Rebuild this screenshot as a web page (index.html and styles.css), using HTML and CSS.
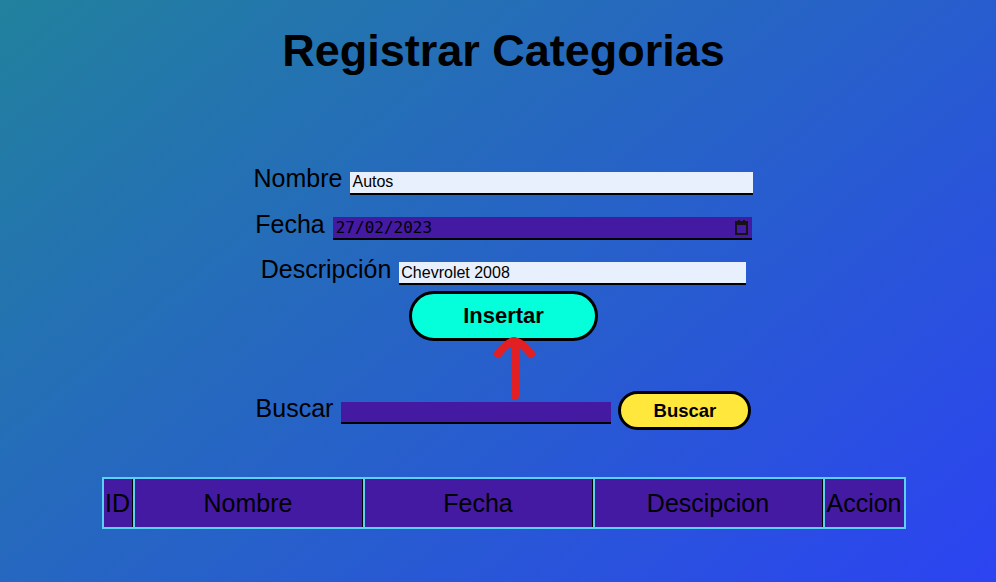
FILE: index.html
```html
<!DOCTYPE html>
<html lang="es">
<head>
<meta charset="utf-8">
<title>Registrar Categorias</title>
<link rel="stylesheet" href="styles.css">
</head>
<body>
<main class="page">
  <h1 class="title">Registrar Categorias</h1>
  <form class="form">
    <div class="row row-nombre">
      <label class="label">Nombre</label>
      <input class="field field-light w-nombre" type="text" value="Autos">
    </div>
    <div class="row row-fecha">
      <label class="label">Fecha</label>
      <div class="field field-date w-fecha">
        <span class="date-text">27/02/2023</span>
        <svg class="cal-icon" width="13" height="15" viewBox="0 0 13 15" aria-hidden="true">
          <rect x="3" y="0" width="2" height="3" fill="#141414"/>
          <rect x="8" y="0" width="2" height="3" fill="#141414"/>
          <rect x="1" y="2" width="11" height="12" fill="none" stroke="#141414" stroke-width="2"/>
          <rect x="1" y="2" width="11" height="3" fill="#141414"/>
        </svg>
      </div>
    </div>
    <div class="row row-desc">
      <label class="label">Descripción</label>
      <input class="field field-light w-desc" type="text" value="Chevrolet 2008">
    </div>
    <div class="row-btn">
      <button type="button" class="btn btn-insert">Insertar</button>
    </div>
    <div class="row row-buscar">
      <label class="label">Buscar</label>
      <input class="field field-dark w-buscar" type="text" value="">
      <button type="button" class="btn btn-buscar">Buscar</button>
    </div>
  </form>
  <table class="table">
    <thead>
      <tr>
        <th class="c-id">ID</th>
        <th class="c-wide">Nombre</th>
        <th class="c-wide">Fecha</th>
        <th class="c-wide">Descipcion</th>
        <th class="c-acc">Accion</th>
      </tr>
    </thead>
  </table>
</main>
<svg class="arrow" width="60" height="80" viewBox="485 330 60 80" aria-hidden="true">
  <path d="M515 348 L515 396" stroke="#e21f22" stroke-width="8" stroke-linecap="round" fill="none"/>
  <path d="M498 354 Q506 343 514 341 Q523 343 531 354" stroke="#e21f22" stroke-width="8" stroke-linecap="round" stroke-linejoin="round" fill="none"/>
</svg>
</body>
</html>
```

FILE: styles.css
```css
html, body {
  margin: 0;
  height: 100%;
}
body {
  background: linear-gradient(140deg, #21819d 0%, #2c43f2 100%);
  font-family: "Liberation Sans", Arial, sans-serif;
  color: #000;
  position: relative;
  overflow: hidden;
}
.page {
  padding-left: 11px;
  padding-top: 25px;
}
.title {
  margin: 0;
  text-align: center;
  font-size: 45px;
  line-height: 52px;
  font-weight: bold;
}
.form {
  margin-top: 87px;
}
.row {
  display: flex;
  justify-content: center;
  align-items: baseline;
  gap: 8px;
}
.row-nombre { margin-bottom: 15px; }
.row-fecha { margin-bottom: 15px; }
.row-desc { margin-bottom: 6px; }
.label {
  font-size: 25px;
  line-height: 28px;
}
.field {
  box-sizing: border-box;
  height: 23px;
  border: 0;
  border-bottom: 2px solid #000;
  padding: 0 2px;
  margin: 0;
  font-family: "Liberation Sans", Arial, sans-serif;
  font-size: 16px;
  color: #000;
  outline: none;
}
.field-light { background: #e8f0fe; }
.field-dark { background: #441aa3; height: 22px; }
.field-date {
  background: #441aa3;
  display: flex;
  align-items: center;
  padding: 0 4px 0 3px;
}
.date-text {
  font-family: "DejaVu Sans Mono", monospace;
  font-size: 16px;
  color: #000;
}
.cal-icon { margin-left: auto; }
.w-nombre { width: 403px; }
.w-fecha { width: 419px; }
.w-desc { width: 347px; }
.w-buscar { width: 270px; }
.row-btn {
  display: flex;
  justify-content: center;
  margin-bottom: 50px;
}
.btn {
  box-sizing: border-box;
  border: 3px solid #000;
  font-family: "Liberation Sans", Arial, sans-serif;
  font-weight: bold;
  color: #000;
  padding: 0;
  cursor: pointer;
}
.btn-insert {
  width: 189px;
  height: 50px;
  border-radius: 25px;
  background: #05ffdb;
  font-size: 22px;
}
.btn-buscar {
  width: 133px;
  height: 39px;
  border-radius: 20px;
  background: #ffe83b;
  font-size: 18.5px;
  margin-left: -1px;
}
.table {
  margin: 47px auto 0;
  border: 2px solid #5bd2f2;
  border-collapse: separate;
  border-spacing: 0;
  background: #441aa3;
}
.table th {
  font-weight: normal;
  font-size: 25px;
  height: 48px;
  padding: 0;
  border-left: 2px solid #5bd2f2;
  border-right: 1px solid #000;
  text-align: center;
  vertical-align: middle;
}
.table th:first-child { border-left: 0; }
.table th:last-child { border-right: 0; }
.c-id { width: 28px; }
.c-wide { width: 227px; }
.c-acc { width: 79px; }
.arrow {
  position: absolute;
  left: 485px;
  top: 330px;
}
```
